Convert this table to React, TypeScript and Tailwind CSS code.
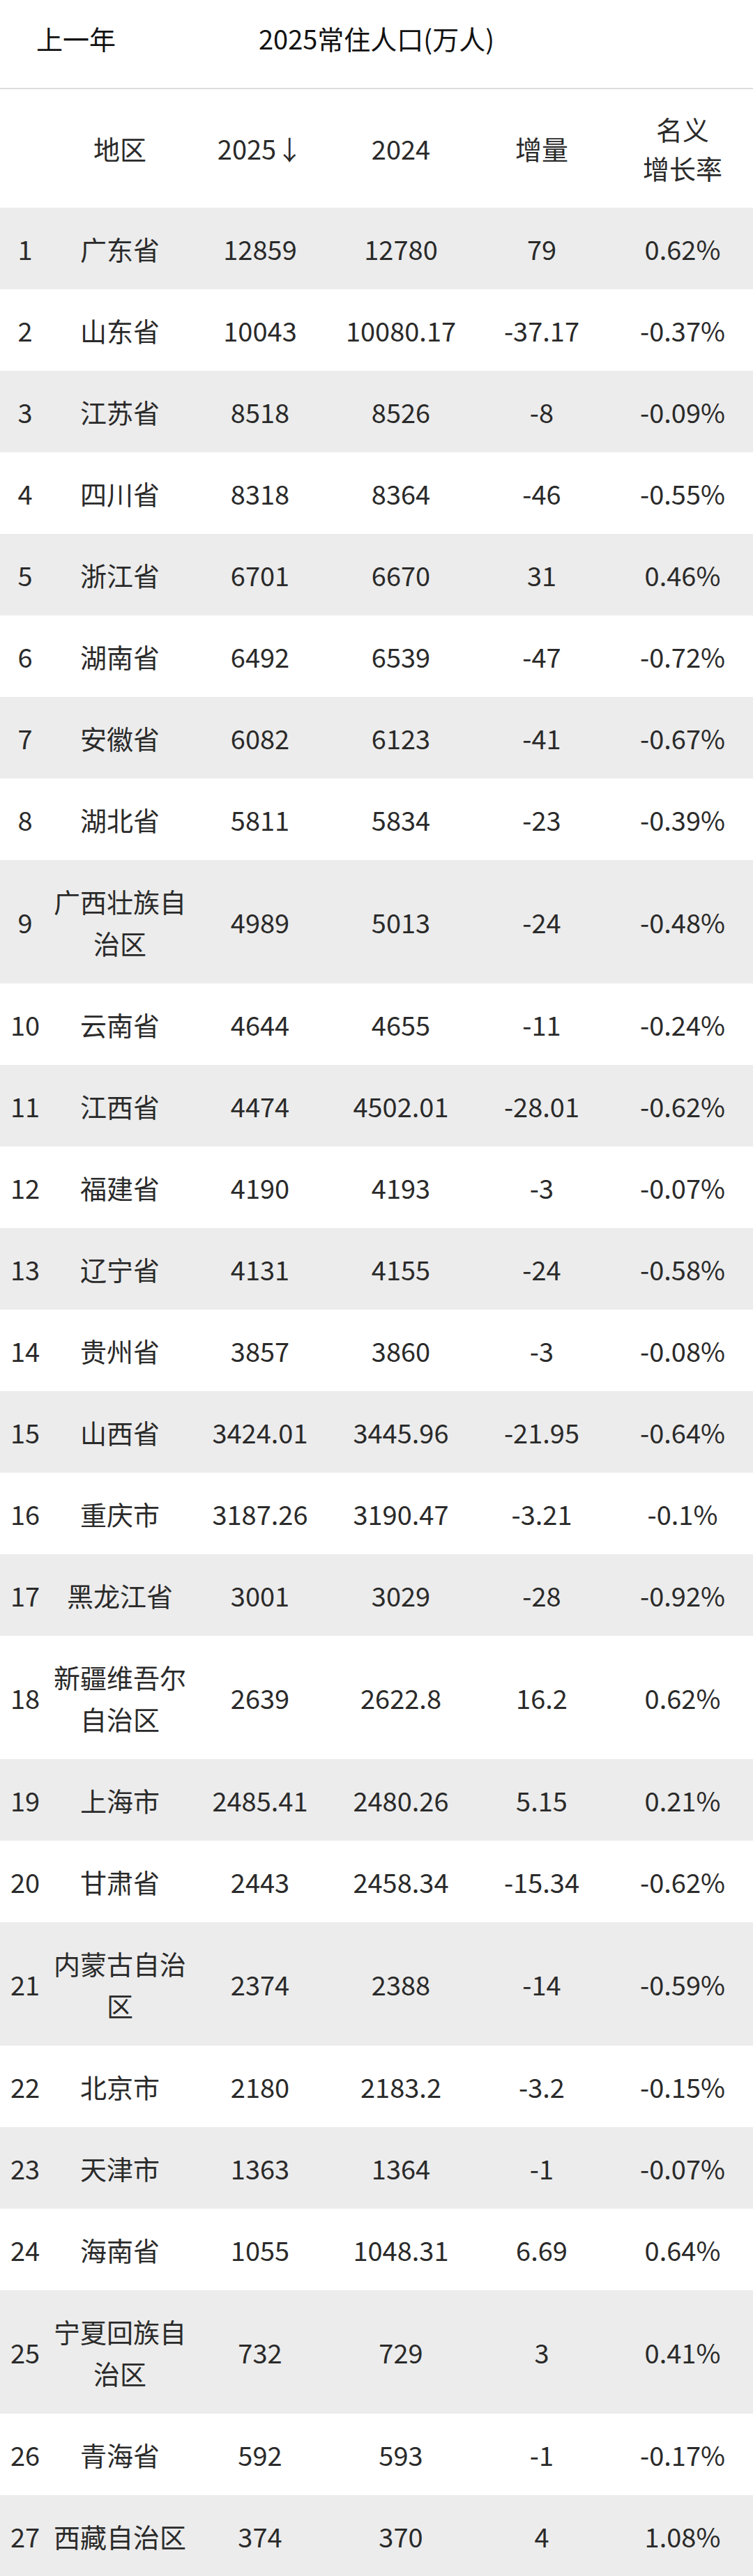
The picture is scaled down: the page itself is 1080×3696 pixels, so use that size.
import React from "react"

type Row = [string, string, string, string, string]

const rows: Row[] = [
  ["广东省", "12859", "12780", "79", "0.62%"],
  ["山东省", "10043", "10080.17", "-37.17", "-0.37%"],
  ["江苏省", "8518", "8526", "-8", "-0.09%"],
  ["四川省", "8318", "8364", "-46", "-0.55%"],
  ["浙江省", "6701", "6670", "31", "0.46%"],
  ["湖南省", "6492", "6539", "-47", "-0.72%"],
  ["安徽省", "6082", "6123", "-41", "-0.67%"],
  ["湖北省", "5811", "5834", "-23", "-0.39%"],
  ["广西壮族自治区", "4989", "5013", "-24", "-0.48%"],
  ["云南省", "4644", "4655", "-11", "-0.24%"],
  ["江西省", "4474", "4502.01", "-28.01", "-0.62%"],
  ["福建省", "4190", "4193", "-3", "-0.07%"],
  ["辽宁省", "4131", "4155", "-24", "-0.58%"],
  ["贵州省", "3857", "3860", "-3", "-0.08%"],
  ["山西省", "3424.01", "3445.96", "-21.95", "-0.64%"],
  ["重庆市", "3187.26", "3190.47", "-3.21", "-0.1%"],
  ["黑龙江省", "3001", "3029", "-28", "-0.92%"],
  ["新疆维吾尔自治区", "2639", "2622.8", "16.2", "0.62%"],
  ["上海市", "2485.41", "2480.26", "5.15", "0.21%"],
  ["甘肃省", "2443", "2458.34", "-15.34", "-0.62%"],
  ["内蒙古自治区", "2374", "2388", "-14", "-0.59%"],
  ["北京市", "2180", "2183.2", "-3.2", "-0.15%"],
  ["天津市", "1363", "1364", "-1", "-0.07%"],
  ["海南省", "1055", "1048.31", "6.69", "0.64%"],
  ["宁夏回族自治区", "732", "729", "3", "0.41%"],
  ["青海省", "592", "593", "-1", "-0.17%"],
  ["西藏自治区", "374", "370", "4", "1.08%"],
]

const grid = "grid grid-cols-[72px_200px_1fr_1fr_1fr_1fr] items-center text-center"

export default function App() {
  return (
    <div
      className="w-[1080px] bg-white text-[#2a2a2a] text-[38px]"
      style={{ fontFamily: '"Noto Sans CJK SC", "Noto Sans", sans-serif' }}
    >
      {/* top bar */}
      <div className="grid grid-cols-[1fr_auto_1fr] h-[128px] pt-[31px] border-b-2 border-[#dcdcdc] text-[#111] leading-[48px]">
        <div className="pl-[52px]">上一年</div>
        <div>2025常住人口(万人)</div>
        <div />
      </div>

      {/* column headers */}
      <div className={`${grid} py-[29px] leading-[56px]`}>
        <div />
        <div>地区</div>
        <div>2025↓</div>
        <div>2024</div>
        <div>增量</div>
        <div>
          名义
          <br />
          增长率
        </div>
      </div>

      {rows.map((r, i) => (
        <div
          key={r[0]}
          className={`${grid} py-[28.5px] leading-[60px] ${i % 2 === 0 ? "bg-[#ececec]" : "bg-white"}`}
        >
          <div>{i + 1}</div>
          <div className="break-all">{r[0]}</div>
          <div>{r[1]}</div>
          <div>{r[2]}</div>
          <div>{r[3]}</div>
          <div>{r[4]}</div>
        </div>
      ))}
    </div>
  )
}
